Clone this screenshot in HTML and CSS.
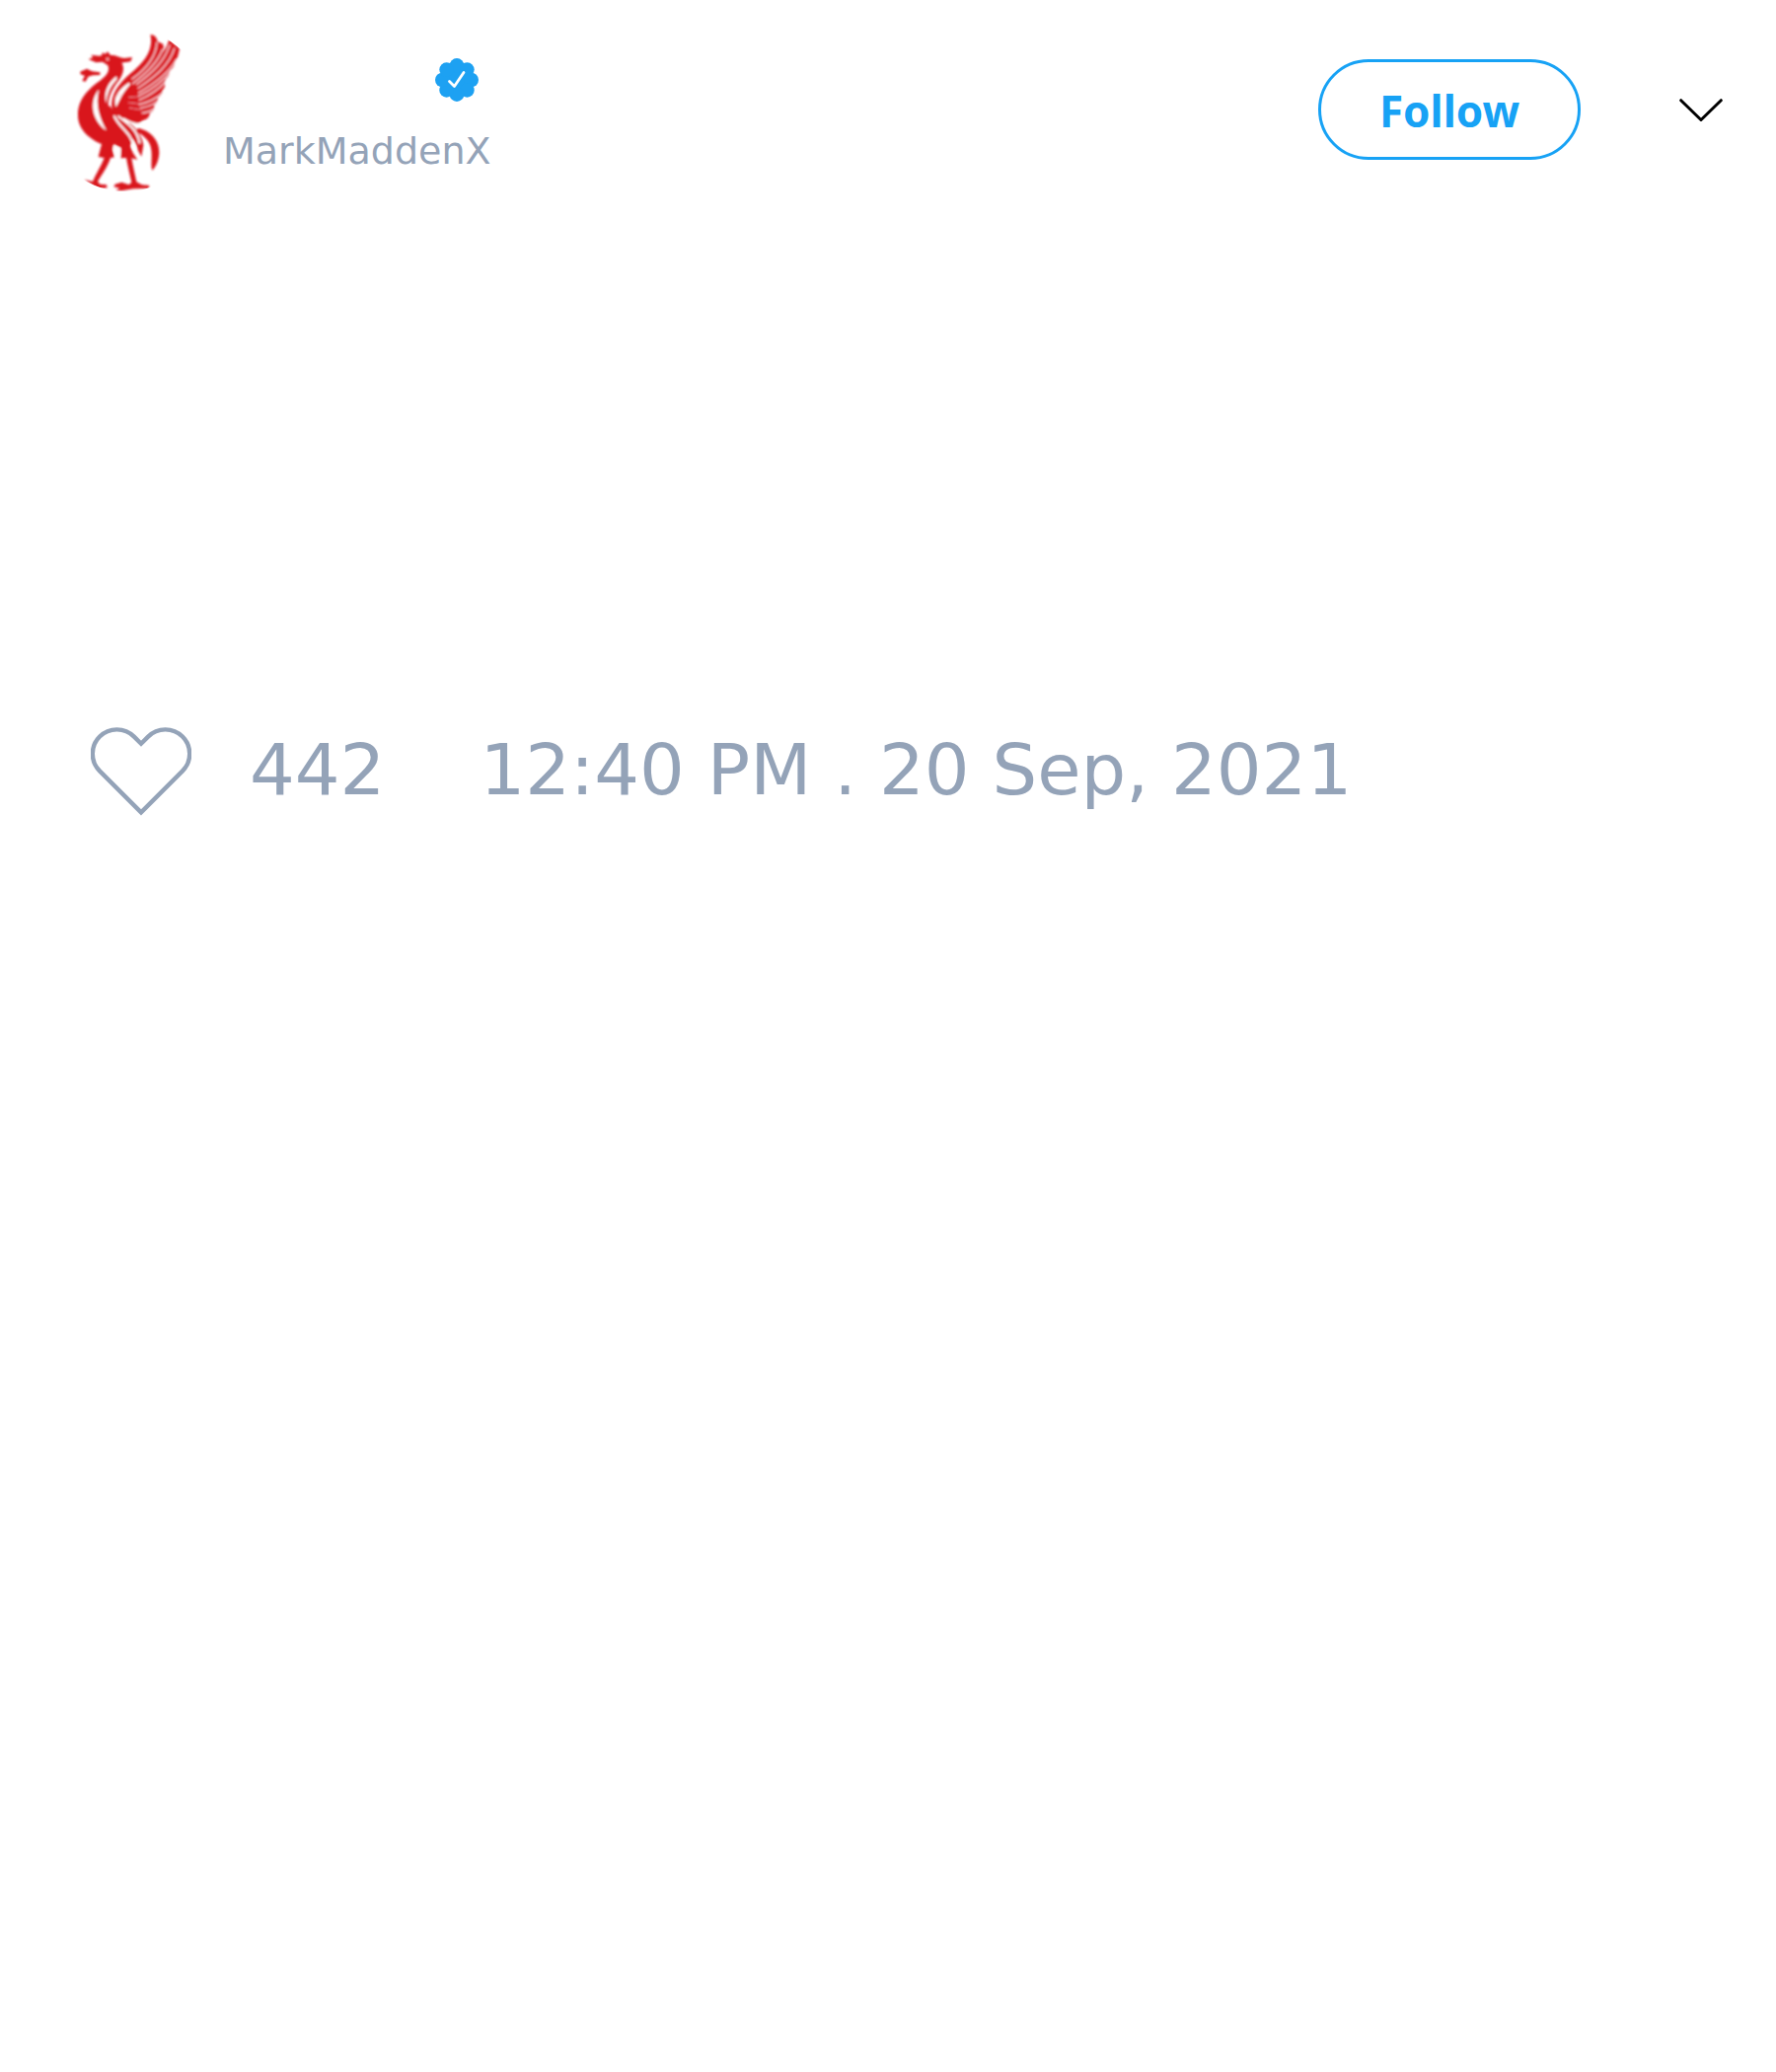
FILE: index.html
```html
<!DOCTYPE html>
<html lang="en">
<head>
<meta charset="utf-8">
<meta name="viewport" content="width=device-width, initial-scale=1">
<title>MarkMaddenX</title>
<link rel="stylesheet" href="styles.css">
</head>
<body>
<article class="post">
  <header class="post-header">
    <svg class="avatar" viewBox="-48 24 498 498" role="img" aria-label="Profile picture">
      <defs><filter id="soft"><feGaussianBlur stdDeviation="2.8"/></filter></defs>
      <g filter="url(#soft)">
        <!-- wing -->
        <path fill="#d9131f" d="M160 264C158 240 168 215 188 192C215 160 262 135 276 88C281 70 280 56 277 46C289 44 297 54 299 66L316 74C318 84 318 90 315 98C326 86 330 74 334 60L366 88C363 104 360 118 352 130C350 142 344 150 336 156C336 168 330 174 324 180L321 192C323 202 319 210 314 214C315 226 308 232 300 238C301 250 294 256 288 260C291 272 284 280 276 282C275 296 266 304 254 306C246 316 232 318 218 312C196 300 180 292 162 290Z"/>
        <g class="feather-lines">
          <path d="M297 70C294 112 264 150 222 180"/>
          <path d="M314 92C298 130 270 158 224 194"/>
          <path d="M336 78C318 130 282 162 236 196"/>
          <path d="M350 88C334 140 290 174 240 208"/>
          <path d="M356 122C336 158 300 188 242 222"/>
          <path d="M342 154C318 184 284 212 242 232"/>
          <path d="M324 188C300 214 276 230 244 244"/>
          <path d="M316 222C292 242 270 252 242 258"/>
          <path d="M300 248C280 262 260 268 238 270"/>
          <path d="M286 272C266 284 248 286 228 282"/>
        </g>
        <path class="gap" stroke-width="7" d="M212 196C184 214 170 238 174 256C180 244 190 220 212 196"/>
        <path fill="#d9131f" d="M184 268C182 236 196 214 222 204L240 210C234 238 242 264 252 286C232 296 204 286 184 268Z"/>
        <path class="gap" stroke-width="3" opacity=".5" d="M212 236L240 234M210 252L246 256M214 268L250 274"/>
        <!-- head, neck and body -->
        <path fill="#d9131f" d="M89 120L103 115L97 107C109 107 119 112 129 109L132 100L140 104L147 97L156 108C174 106 184 116 198 117L222 114L218 126C206 130 198 129 190 131C200 148 194 164 182 184C166 204 150 228 149 260L158 266L172 292C204 308 236 350 216 384L224 404L238 426L220 421C224 444 230 470 235 493L251 502L274 504L272 513L226 514L190 520L172 520L184 512L166 508L170 500L190 494L212 502L220 494C214 468 208 444 204 420L187 421L188 390L166 378L162 396L168 418L156 420C148 446 130 470 117 492L124 500L144 502L146 511L120 514L76 486L102 492C112 468 130 440 137 420L119 417L129 378C92 362 57 334 57 290C57 238 92 208 128 182C148 168 154 152 148 139L132 128L112 130Z"/>
        <!-- tongue -->
        <path fill="#d9131f" d="M64 158L84 149L100 157L124 160L124 168L102 169L88 173L80 188L70 186L78 170L65 166Z"/>
        <path fill="#fff" d="M121 212C90 246 99 307 144 337C124 302 108 260 121 212ZM174 172C150 190 134 220 142 255C146 220 156 202 176 180ZM164 384L187 392L184 415L172 414Z"/>
        <circle cx="147" cy="120" r="5" fill="#f5a3a5"/>
        <!-- tail feathers -->
        <path fill="#d9131f" d="M240 330C282 338 306 372 304 406C302 434 292 448 284 458C274 442 292 396 268 366C256 350 242 344 234 338ZM172 290C218 302 252 346 256 382L250 416L240 398C232 356 196 344 166 300Z"/>
        <path class="gap" stroke-width="6" d="M168 294C184 330 220 342 228 390M180 294C216 320 238 338 244 374M196 302C222 318 240 322 262 316"/>
      </g>
    </svg>
    <div class="identity">
      <div class="name-row">
        <svg class="verified" viewBox="0 0 44 44" role="img" aria-label="Verified account">
          <g fill="#1da1f2">
            <circle cx="22" cy="22" r="16"/>
            <circle cx="22" cy="7.3" r="7.3"/><circle cx="32.4" cy="11.6" r="7.3"/>
            <circle cx="36.7" cy="22" r="7.3"/><circle cx="32.4" cy="32.4" r="7.3"/>
            <circle cx="22" cy="36.7" r="7.3"/><circle cx="11.6" cy="32.4" r="7.3"/>
            <circle cx="7.3" cy="22" r="7.3"/><circle cx="11.6" cy="11.6" r="7.3"/>
          </g>
          <path d="M14.5 23.5L19.5 28.5L29 14.5" fill="none" stroke="#fff" stroke-width="2.8" stroke-linecap="round" stroke-linejoin="round"/>
        </svg>
      </div>
      <span class="username">MarkMaddenX</span>
    </div>
    <button class="follow" type="button">Follow</button>
    <button class="more" type="button" aria-label="More options">
      <svg class="chevron" viewBox="0 -2 44 26" aria-hidden="true"><path d="M1.7 1.7L22 21.5L42.3 1.7" fill="none" stroke="#000" stroke-width="3" stroke-linecap="round" stroke-linejoin="round"/></svg>
    </button>
  </header>
  <footer class="post-footer">
    <button class="like" type="button" aria-label="Like, 442 likes">
      <svg class="heart" viewBox="0 -3 102 93" aria-hidden="true"><path d="M51 86.4L9 44.4A24.6 24.6 0 1 1 43.9 9.6L51 16.7L58.1 9.6A24.6 24.6 0 1 1 93 44.4Z" fill="none" stroke="#94a3b8" stroke-width="4.4"/></svg>
      <span>442</span>
    </button>
    <time datetime="2021-09-20T12:40">12:40 PM . 20 Sep, 2021</time>
  </footer>
</article>
</body>
</html>
```
FILE: styles.css
```css
* {
  box-sizing: border-box;
}

body {
  margin: 0;
  background: #fff;
  color: #94a3b8;
  font-family: "DejaVu Sans", sans-serif;
}

button {
  margin: 0;
  padding: 0;
  border: 0;
  background: none;
  color: inherit;
  font: inherit;
  cursor: pointer;
}

svg {
  display: block;
  flex: none;
}

.post {
  display: flex;
  flex-direction: column;
  gap: 532px;
  padding: 28px 44px;
}

.post-header {
  display: flex;
  align-items: center;
}

.avatar {
  width: 166px;
  height: 166px;
  border-radius: 50%;
}

.feather-lines,
.gap {
  fill: none;
  stroke: #fff;
  stroke-linecap: round;
}

.feather-lines {
  stroke-width: 5;
  opacity: 0.7;
}

.identity {
  display: flex;
  flex-direction: column;
  gap: 26px;
  margin-right: auto;
  padding: 14px 0 0 16px;
}

.name-row {
  display: flex;
  padding-left: 215px;
}

.verified {
  width: 44px;
  height: 44px;
}

.username {
  font-size: 38px;
  line-height: 48px;
}

.follow {
  width: 266px;
  height: 102px;
  padding-top: 2px;
  border: 3px solid #17a2f5;
  border-radius: 51px;
  color: #17a2f5;
  font: bold 44px/60px "Noto Sans", sans-serif;
}

.more {
  margin-left: 90px;
  padding: 10px;
}

.chevron {
  width: 44px;
  height: 26px;
}

.post-footer {
  display: flex;
  align-items: center;
  gap: 96px;
  padding-left: 48px;
  font-size: 72px;
  line-height: 108px;
}

.like {
  display: flex;
  align-items: center;
  gap: 59px;
}

.heart {
  width: 102px;
  height: 93px;
}
```
